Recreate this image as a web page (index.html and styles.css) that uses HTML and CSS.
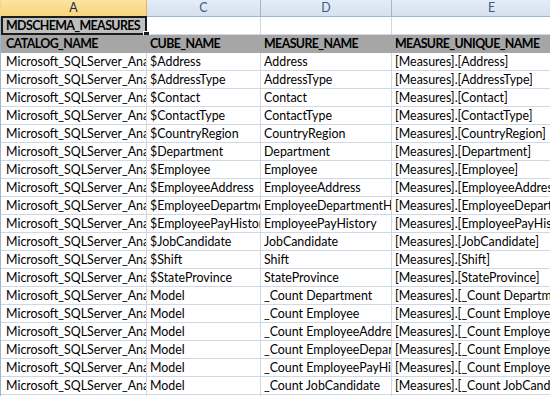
FILE: index.html
```html
<!DOCTYPE html>
<html>
<head>
<meta charset="utf-8">
<link rel="stylesheet" href="styles.css">
</head>
<body>
<div class="sheet">
  <div class="row colhead">
    <div class="edge"></div>
    <div class="c ca sel">A</div>
    <div class="c cc">C</div>
    <div class="c cd">D</div>
    <div class="c ce">E</div>
  </div>
  <div class="row r1">
    <div class="edge"></div>
    <div class="c ca title">MDSCHEMA_MEASURES</div>
    <div class="c cc"></div>
    <div class="c cd"></div>
    <div class="c ce"></div>
    <div class="selbox"><span class="handle"></span></div>
  </div>
  <div class="row hdr">
    <div class="edge"></div>
    <div class="c ca">CATALOG_NAME</div>
    <div class="c cc">CUBE_NAME</div>
    <div class="c cd">MEASURE_NAME</div>
    <div class="c ce">MEASURE_UNIQUE_NAME</div>
  </div>
  <div class="row"><div class="edge"></div><div class="c ca">Microsoft_SQLServer_AnalysisServices</div><div class="c cc">$Address</div><div class="c cd">Address</div><div class="c ce">[Measures].[Address]</div></div>
  <div class="row"><div class="edge"></div><div class="c ca">Microsoft_SQLServer_AnalysisServices</div><div class="c cc">$AddressType</div><div class="c cd">AddressType</div><div class="c ce">[Measures].[AddressType]</div></div>
  <div class="row"><div class="edge"></div><div class="c ca">Microsoft_SQLServer_AnalysisServices</div><div class="c cc">$Contact</div><div class="c cd">Contact</div><div class="c ce">[Measures].[Contact]</div></div>
  <div class="row"><div class="edge"></div><div class="c ca">Microsoft_SQLServer_AnalysisServices</div><div class="c cc">$ContactType</div><div class="c cd">ContactType</div><div class="c ce">[Measures].[ContactType]</div></div>
  <div class="row"><div class="edge"></div><div class="c ca">Microsoft_SQLServer_AnalysisServices</div><div class="c cc">$CountryRegion</div><div class="c cd">CountryRegion</div><div class="c ce">[Measures].[CountryRegion]</div></div>
  <div class="row"><div class="edge"></div><div class="c ca">Microsoft_SQLServer_AnalysisServices</div><div class="c cc">$Department</div><div class="c cd">Department</div><div class="c ce">[Measures].[Department]</div></div>
  <div class="row"><div class="edge"></div><div class="c ca">Microsoft_SQLServer_AnalysisServices</div><div class="c cc">$Employee</div><div class="c cd">Employee</div><div class="c ce">[Measures].[Employee]</div></div>
  <div class="row"><div class="edge"></div><div class="c ca">Microsoft_SQLServer_AnalysisServices</div><div class="c cc">$EmployeeAddress</div><div class="c cd">EmployeeAddress</div><div class="c ce">[Measures].[EmployeeAddress]</div></div>
  <div class="row"><div class="edge"></div><div class="c ca">Microsoft_SQLServer_AnalysisServices</div><div class="c cc">$EmployeeDepartmentHistory</div><div class="c cd">EmployeeDepartmentHistory</div><div class="c ce">[Measures].[EmployeeDepartmentHistory]</div></div>
  <div class="row"><div class="edge"></div><div class="c ca">Microsoft_SQLServer_AnalysisServices</div><div class="c cc">$EmployeePayHistory</div><div class="c cd">EmployeePayHistory</div><div class="c ce">[Measures].[EmployeePayHistory]</div></div>
  <div class="row"><div class="edge"></div><div class="c ca">Microsoft_SQLServer_AnalysisServices</div><div class="c cc">$JobCandidate</div><div class="c cd">JobCandidate</div><div class="c ce">[Measures].[JobCandidate]</div></div>
  <div class="row"><div class="edge"></div><div class="c ca">Microsoft_SQLServer_AnalysisServices</div><div class="c cc">$Shift</div><div class="c cd">Shift</div><div class="c ce">[Measures].[Shift]</div></div>
  <div class="row"><div class="edge"></div><div class="c ca">Microsoft_SQLServer_AnalysisServices</div><div class="c cc">$StateProvince</div><div class="c cd">StateProvince</div><div class="c ce">[Measures].[StateProvince]</div></div>
  <div class="row"><div class="edge"></div><div class="c ca">Microsoft_SQLServer_AnalysisServices</div><div class="c cc">Model</div><div class="c cd">_Count Department</div><div class="c ce">[Measures].[_Count Department]</div></div>
  <div class="row"><div class="edge"></div><div class="c ca">Microsoft_SQLServer_AnalysisServices</div><div class="c cc">Model</div><div class="c cd">_Count Employee</div><div class="c ce">[Measures].[_Count Employee]</div></div>
  <div class="row"><div class="edge"></div><div class="c ca">Microsoft_SQLServer_AnalysisServices</div><div class="c cc">Model</div><div class="c cd">_Count EmployeeAddress</div><div class="c ce">[Measures].[_Count EmployeeAddress]</div></div>
  <div class="row"><div class="edge"></div><div class="c ca">Microsoft_SQLServer_AnalysisServices</div><div class="c cc">Model</div><div class="c cd">_Count EmployeeDepartmentHistory</div><div class="c ce">[Measures].[_Count EmployeeDepartmentHistory]</div></div>
  <div class="row"><div class="edge"></div><div class="c ca">Microsoft_SQLServer_AnalysisServices</div><div class="c cc">Model</div><div class="c cd">_Count EmployeePayHistory</div><div class="c ce">[Measures].[_Count EmployeePayHistory]</div></div>
  <div class="row"><div class="edge"></div><div class="c ca">Microsoft_SQLServer_AnalysisServices</div><div class="c cc">Model</div><div class="c cd">_Count JobCandidate</div><div class="c ce">[Measures].[_Count JobCandidate]</div></div>
  <div class="row"><div class="edge"></div><div class="c ca"></div><div class="c cc"></div><div class="c cd"></div><div class="c ce"></div></div>
</div>
</body>
</html>
```
FILE: styles.css
```css
html,body{margin:0;padding:0;background:#fff;overflow:hidden}
.sheet{width:550px;height:396px;overflow:hidden;font-family:"Lato",sans-serif;font-size:12.4px;color:#000}
.row{display:flex;height:18px;position:relative}
.edge{flex:none;width:1px;background:#9eb6ce}
.c{flex:none;box-sizing:border-box;height:18px;border-right:1px solid #d0d7e5;border-bottom:1px solid #d0d7e5;
  padding:0 2px 0 3px;white-space:nowrap;overflow:hidden;line-height:17px}
.ca{width:146px;padding-left:5px}
.cc{width:114px}
.cd{width:131px}
.ce{width:200px}
.colhead{height:17px}
.colhead .edge{background:#f9d580}
.colhead .c{height:17px;line-height:16px;text-align:center;padding:0;color:#3d5b82;
  background:linear-gradient(#e4ecf7,#d5e1f0);border-right:1px solid #9eb6ce;border-bottom:1px solid #9eb6ce;font-size:12.4px}
.colhead .c.sel{background:linear-gradient(#fbe3a3,#f8d47c);color:#1d2c47;border-bottom:1px solid #f2a33a;border-right:1px solid #e5b55c}
.r1 .title{background:#bfbfbf;font-weight:700;letter-spacing:-0.6px}
.hdr .c{background:#a6a6a6;border-color:#a6a6a6;font-weight:700;letter-spacing:-0.6px}
.hdr .edge{background:#9eb6ce}
.selbox{position:absolute;left:1px;top:-1px;width:146px;height:19px;box-sizing:border-box;border:2px solid #1b1b1b}
.handle{position:absolute;right:-5px;bottom:-5px;width:5px;height:5px;background:#1b1b1b;border:1px solid #fff}
```
